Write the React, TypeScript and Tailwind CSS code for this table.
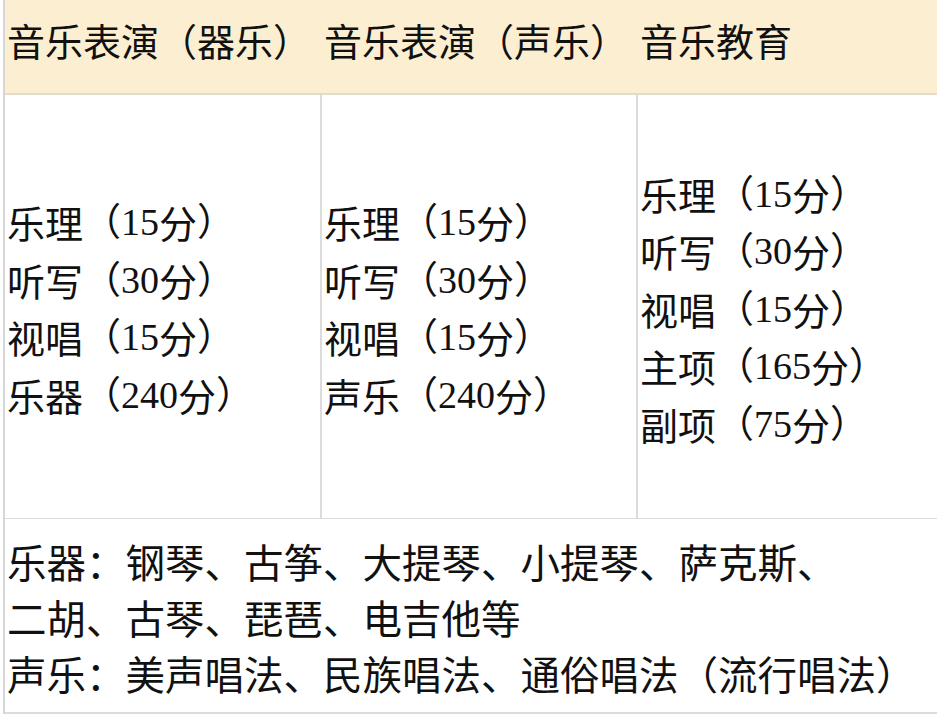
const sans = "font-['Noto_Sans_CJK_SC','Noto_Sans',sans-serif]";
const mixed = "font-['Liberation_Serif','Noto_Sans_CJK_SC',serif]";

type Item = { name: string; score: string };

const columns: Item[][] = [
  [
    { name: "乐理", score: "15" },
    { name: "听写", score: "30" },
    { name: "视唱", score: "15" },
    { name: "乐器", score: "240" },
  ],
  [
    { name: "乐理", score: "15" },
    { name: "听写", score: "30" },
    { name: "视唱", score: "15" },
    { name: "声乐", score: "240" },
  ],
  [
    { name: "乐理", score: "15" },
    { name: "听写", score: "30" },
    { name: "视唱", score: "15" },
    { name: "主项", score: "165" },
    { name: "副项", score: "75" },
  ],
];

const headings = ["音乐表演（器乐）", "音乐表演（声乐）", "音乐教育"];

function ScoreCell({ items, last }: { items: Item[]; last?: boolean }) {
  return (
    <div
      className={`flex h-[424px] flex-col justify-center border-b border-[#dcdcdc] pt-[4px] pl-[2px] ${
        last ? "" : "border-r-2"
      }`}
    >
      {items.map((it, i) => (
        <div
          key={i}
          className={`${mixed} flex h-[57.5px] items-center whitespace-nowrap text-[38px] leading-none`}
        >
          <span className={sans}>{it.name}</span>（{it.score}<span className={sans}>分</span>）
        </div>
      ))}
    </div>
  );
}

export default function App() {
  return (
    <div className="min-h-[718px] w-[937px] overflow-hidden bg-white pl-[3px] text-[#111]">
      <div className="grid grid-cols-[317px_316px_1fr] border-l-2 border-[#d6d6d6]">
        {headings.map((h, i) => (
          <div
            key={i}
            className={`${sans} flex h-[95px] items-center whitespace-nowrap border-b-2 border-[#e2dccd] bg-[#fcefd1] pb-[14px] pl-[2px] text-[38px]`}
          >
            {h}
          </div>
        ))}

        {columns.map((items, i) => (
          <ScoreCell key={i} items={items} last={i === columns.length - 1} />
        ))}

        <div
          className={`${sans} col-span-3 flex h-[195px] flex-col justify-center whitespace-nowrap border-b-2 border-[#dcdcdc] pt-[2px] pl-[2px] text-[39.5px] leading-[56px]`}
        >
          <div>乐器：钢琴、古筝、大提琴、小提琴、萨克斯、</div>
          <div>二胡、古琴、琵琶、电吉他等</div>
          <div>声乐：美声唱法、民族唱法、通俗唱法（流行唱法）</div>
        </div>
      </div>
    </div>
  );
}
